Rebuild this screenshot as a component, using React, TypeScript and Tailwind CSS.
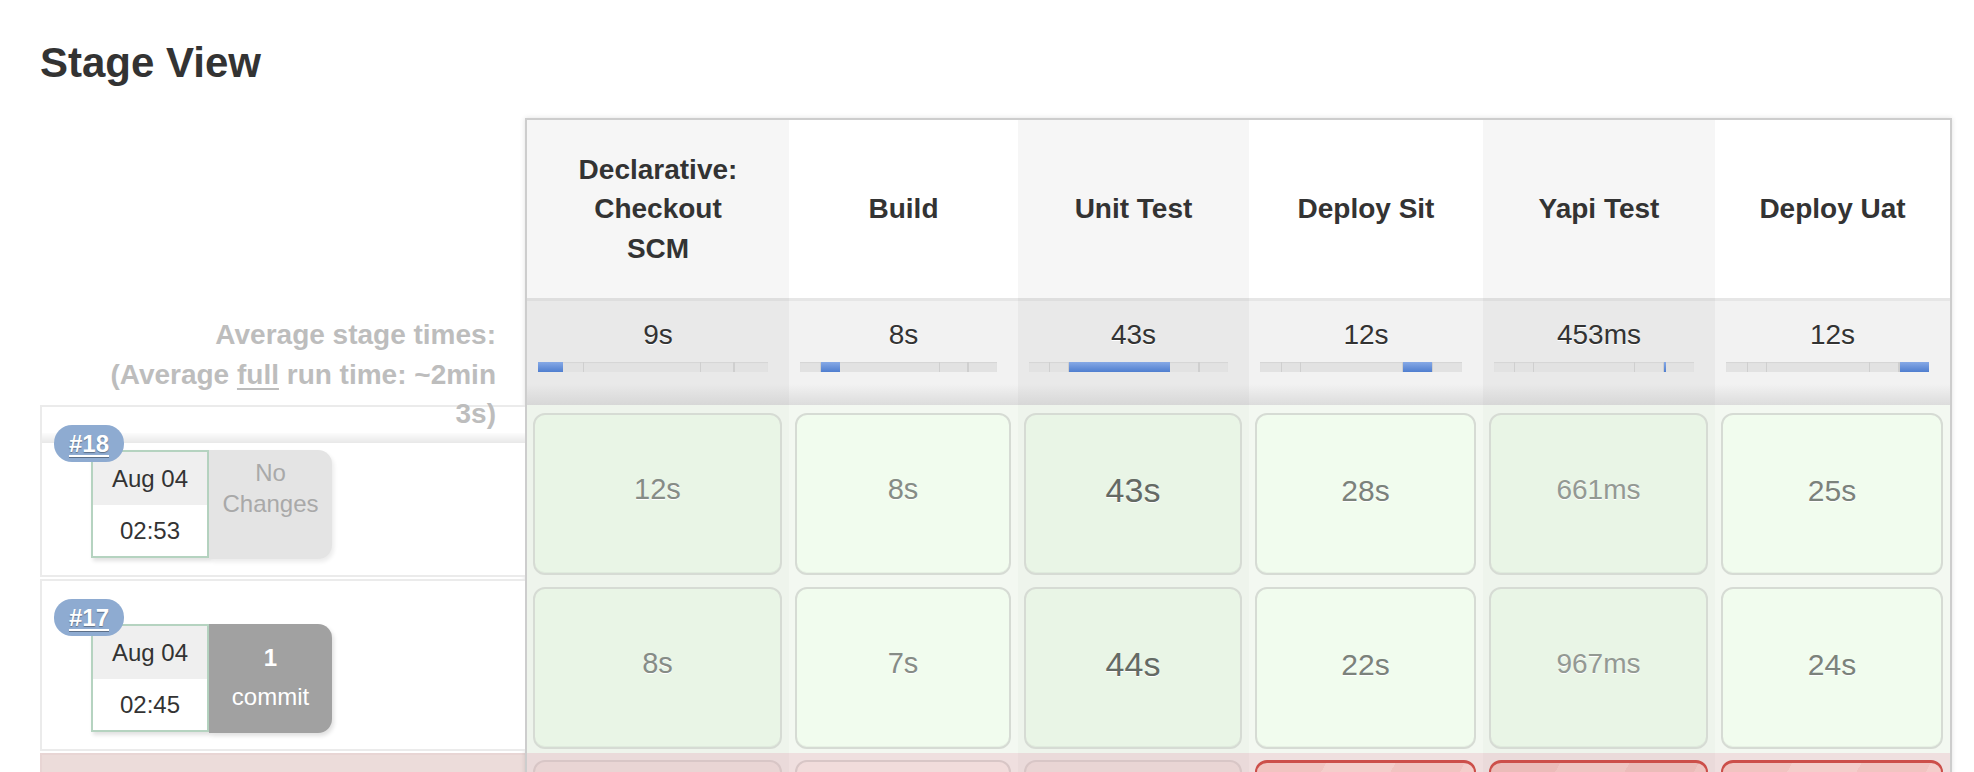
import React from 'react';

const DUR = [9, 8, 43, 12, 0.453, 12];
const TOTAL = DUR.reduce((a, b) => a + b, 0);

type Stage = { name: string[]; w: string; avg: string; odd: boolean };
const stages: Stage[] = [
  { name: ['Declarative:', 'Checkout', 'SCM'], w: 'w-[262px]', avg: '9s', odd: true },
  { name: ['Build'], w: 'w-[229px]', avg: '8s', odd: false },
  { name: ['Unit Test'], w: 'w-[231px]', avg: '43s', odd: true },
  { name: ['Deploy Sit'], w: 'w-[234px]', avg: '12s', odd: false },
  { name: ['Yapi Test'], w: 'w-[232px]', avg: '453ms', odd: true },
  { name: ['Deploy Uat'], w: 'w-[235px]', avg: '12s', odd: false },
];

const rows = [
  ['12s', '8s', '43s', '28s', '661ms', '25s'],
  ['8s', '7s', '44s', '22s', '967ms', '24s'],
];

function durClass(v: string) {
  if (v === '43s' || v === '44s') return 'text-[34px] text-[#646a64]';
  if (v.endsWith('ms')) return 'text-[28px] text-[#939993]';
  if (v === '28s' || v === '25s' || v === '22s' || v === '24s') return 'text-[30px] text-[#7b827b]';
  return 'text-[29px] text-[#868c86]';
}

function Bar({ active }: { active: number }) {
  return (
    <div className="mt-[7px] ml-[11px] mr-[21px] flex h-[10px] overflow-hidden bg-[#e2e2e2] shadow-[inset_0_1px_1px_rgba(0,0,0,0.06)]">
      {DUR.map((d, i) => (
        <div
          key={i}
          style={{ width: `${(d / TOTAL) * 100}%` }}
          className={
            i === active
              ? 'h-full min-w-[2px] bg-[linear-gradient(to_bottom,#86a9e6,#4f7ecf)]'
              : 'h-full border-r border-[#cfcfcf] last:border-r-0'
          }
        />
      ))}
    </div>
  );
}

function RunRow({
  num,
  date,
  time,
  commit,
  band,
}: {
  num: string;
  date: string;
  time: string;
  commit: boolean;
  band: boolean;
}) {
  return (
    <div className="h-[174px]">
      <div className="relative h-[172px] border-2 border-r-0 border-[#ebebeb] bg-white">
        {band && (
          <div className="absolute left-0 right-0 top-[26px] h-[10px] bg-[linear-gradient(to_bottom,rgba(0,0,0,0.01),rgba(0,0,0,0.09))]" />
        )}
        <div className="absolute left-[12px] top-[18px] z-10 flex h-[37px] w-[70px] items-center justify-center rounded-[18px] bg-[#8eabd1] text-[24px] font-bold text-white underline decoration-[2px] underline-offset-[3px] [text-shadow:0_1px_1px_rgba(0,0,0,0.35)]">
          {num}
        </div>
        <div className="ml-[49px] mt-[43px] flex">
          <div className="flex h-[108px] w-[118px] flex-col border-2 border-[#b5d3c0] bg-white text-[24px] text-[#333] shadow-[2px_3px_4px_rgba(0,0,0,0.12)]">
            <div className="flex h-[53px] items-center justify-center bg-[#efefef]">{date}</div>
            <div className="flex flex-1 items-center justify-center">{time}</div>
          </div>
          {commit ? (
            <div className="flex h-[109px] w-[123px] flex-col items-center rounded-r-[14px] bg-[#a1a1a1] pt-[14px] text-[24px] leading-[39px] text-white shadow-[2px_3px_4px_rgba(0,0,0,0.12)]">
              <div className="font-bold">1</div>
              <div>commit</div>
            </div>
          ) : (
            <div className="flex h-[109px] w-[123px] flex-col items-center rounded-r-[14px] bg-[#e4e4e4] pt-[7px] text-[24px] leading-[31px] text-[#a9a9a9] shadow-[2px_3px_4px_rgba(0,0,0,0.08)]">
              <div>No</div>
              <div>Changes</div>
            </div>
          )}
        </div>
      </div>
    </div>
  );
}

export default function App() {
  return (
    <div className="h-[772px] w-[1974px] overflow-hidden bg-white font-['Liberation_Sans',Arial,sans-serif] text-[#333]">
      <h1 className="pl-[40px] pt-[40px] text-[42px] font-bold leading-[46px] text-[#333]">Stage View</h1>
      <div className="mt-[32px] flex pl-[40px]">
        {/* left panel */}
        <div className="w-[485px] shrink-0">
          <div className="h-[180px]" />
          <div className="relative z-10 h-[107px] pr-[29px] pt-[17px] text-right text-[28px] font-bold leading-[39.5px] text-[#bdbdbd]">
            <div>Average stage times:</div>
            <div>
              (Average <span className="underline decoration-[2px] underline-offset-[4px]">full</span> run time: ~2min
            </div>
            <div>3s)</div>
          </div>
          <RunRow num="#18" date="Aug 04" time="02:53" commit={false} band />
          <RunRow num="#17" date="Aug 04" time="02:45" commit band={false} />
          <div className="h-[80px] border-2 border-r-0 border-[#e8d5d4] bg-[#ecdcda]" />
        </div>

        {/* stage table */}
        <div className="shrink-0 border-x-2 border-t-2 border-[#cdcdcd] shadow-[0_0_5px_rgba(0,0,0,0.12)]">
          {/* header */}
          <div className="flex">
            {stages.map((s, i) => (
              <div
                key={i}
                className={`${s.w} flex h-[178px] flex-col items-center justify-center text-center text-[28px] font-bold leading-[39.5px] text-[#333] ${
                  s.odd ? 'bg-[#f6f6f6]' : 'bg-white'
                }`}
              >
                {s.name.map((n) => (
                  <div key={n}>{n}</div>
                ))}
              </div>
            ))}
          </div>
          {/* averages */}
          <div className="flex">
            {stages.map((s, i) => (
              <div
                key={i}
                className={`${s.w} h-[107px] border-t-[3px] pt-[14px] ${
                  s.odd
                    ? 'border-[#dedede] bg-[linear-gradient(to_bottom,#e9e9e9_0%,#e9e9e9_80%,#d7d7d7_100%)]'
                    : 'border-[#e6e6e6] bg-[linear-gradient(to_bottom,#f2f2f2_0%,#f2f2f2_80%,#dcdcdc_100%)]'
                }`}
              >
                <div className="text-center text-[28px] leading-[40px] text-[#333] [text-shadow:0_1px_0_#fff]">{s.avg}</div>
                <Bar active={i} />
              </div>
            ))}
          </div>
          {/* runs */}
          {rows.map((r, ri) => (
            <div key={ri} className="flex">
              {stages.map((s, i) => (
                <div
                  key={i}
                  className={`${s.w} h-[174px] pb-[4px] pl-[6px] pr-[7px] pt-[8px] ${
                    s.odd ? 'bg-[#eef4ec]' : 'bg-[#f3f8f1]'
                  }`}
                >
                  <div
                    className={`flex h-full items-center justify-center rounded-[12px] border-2 border-[#d6dbd4] pb-[8px] shadow-[inset_0_-1px_0_rgba(0,0,0,0.04)] ${
                      s.odd ? 'bg-[#e9f5e6]' : 'bg-[#f1fcee]'
                    }`}
                  >
                    <span className={`${durClass(r[i])} [text-shadow:0_1px_0_#fff]`}>{r[i]}</span>
                  </div>
                </div>
              ))}
            </div>
          ))}
          {/* failed run (cropped) */}
          <div className="flex">
            {stages.map((s, i) => (
              <div
                key={i}
                className={`${s.w} h-[80px] pl-[6px] pr-[7px] pt-[7px] ${s.odd ? 'bg-[#eadada]' : 'bg-[#efdfdf]'}`}
              >
                {i < 3 ? (
                  <div
                    className={`h-full rounded-t-[12px] border-2 border-[#d8c6c6] ${
                      s.odd ? 'bg-[#e9d5d4]' : 'bg-[#f1dcdb]'
                    }`}
                  />
                ) : (
                  <div
                    className={`h-full rounded-t-[12px] border-2 border-t-[3px] border-[#cc4f4a] ${
                      s.odd
                        ? 'bg-[repeating-linear-gradient(120deg,#ebbcb9_0px,#ebbcb9_60px,#efc5c2_60px,#efc5c2_120px)]'
                        : 'bg-[repeating-linear-gradient(120deg,#f1c4c1_0px,#f1c4c1_60px,#f4cecb_60px,#f4cecb_120px)]'
                    }`}
                  />
                )}
              </div>
            ))}
          </div>
        </div>
      </div>
    </div>
  );
}
